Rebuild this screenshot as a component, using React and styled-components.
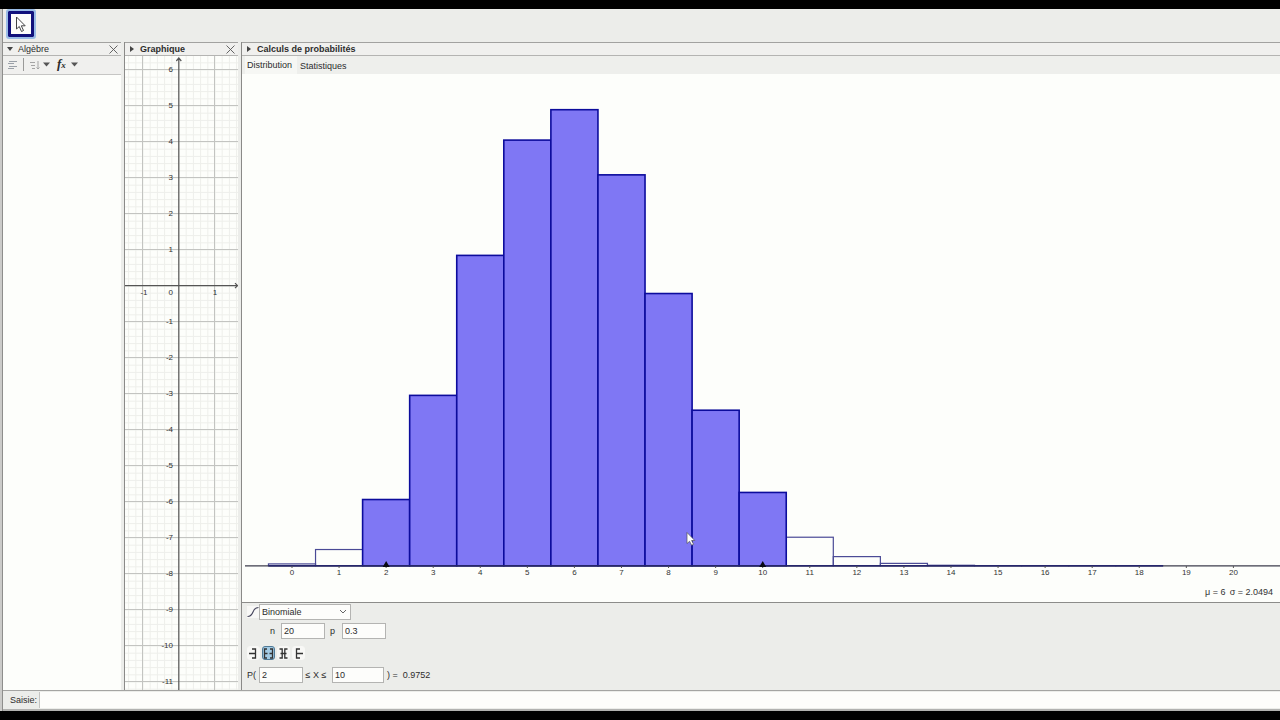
import { useState } from 'react'
import styled, { createGlobalStyle } from 'styled-components'

const GlobalStyle = createGlobalStyle`
  * {
    box-sizing: border-box;
  }

  body {
    margin: 0;
    background: #000;
    color: #2c2c2c;
    font-family: "Liberation Sans", Arial, sans-serif;
    font-size: 9px;
  }

  button, input, select {
    font: inherit;
    color: inherit;
  }
`

const Screen = styled.div`
  display: flex;
  flex-direction: column;
  min-height: 100vh;
  padding: 9px 0;
  overflow: hidden;
`

const Window = styled.main`
  display: flex;
  flex: 1;
  flex-direction: column;
  margin-left: 2px;
  border-left: 1px solid #8e8e8c;
  box-shadow: -2px 0 #cbcbc9;
  background: #ecedea;
`

const Toolbar = styled.div`
  display: flex;
  height: 33px;
  padding: 2px 5px;
`

const ToolButton = styled.button`
  display: grid;
  place-items: center;
  width: 26px;
  height: 26px;
  padding: 0;
  border: 3px solid #11117c;
  border-radius: 1px;
  outline: 2px solid #9abce6;
  background: #fdfdfb;
`

const Panels = styled.div`
  display: grid;
  flex: 1;
  grid-template-columns: 118px 114px 1fr;
  column-gap: 3px;
  border-bottom: 1px solid #a4a4a2;
`

const Panel = styled.section`
  display: flex;
  flex-direction: column;
  min-width: 0;
  border-left: ${props => props.$edge ? "1px solid #8a8a88" : "none"};
`

const PanelHeader = styled.header`
  display: flex;
  align-items: center;
  gap: 5px;
  height: 14px;
  padding: 0 3px 0 4px;
  border-top: 1px solid #a2a2a0;
  border-bottom: 1px solid #b4b4b2;
  background: #f0f0ee;
`

const PanelTitle = styled.h2`
  flex: 1;
  margin: 0;
  font-size: 9px;
  font-weight: ${props => props.$light ? "normal" : "bold"};
  line-height: 12px;
  white-space: nowrap;
`

const PlainButton = styled.button`
  display: flex;
  align-items: center;
  gap: 3px;
  padding: 0;
  border: none;
  background: none;
`

const StyleBar = styled.div`
  display: flex;
  align-items: center;
  gap: 6px;
  height: 19px;
  padding: 0 5px 1px;
  border-bottom: 1px solid #c6c6c4;
  background: #f0f0ee;
`

const Separator = styled.span`
  width: 1px;
  height: 13px;
  background: #9a9a98;
`

const FunctionIcon = styled.span`
  width: 12px;
  padding-left: 1px;
  font-family: "Liberation Serif", serif;
  font-size: 13px;
  font-style: italic;
  font-weight: bold;
  line-height: 14px;
  text-align: left;
  white-space: nowrap;

  small {
    font-size: 9px;
  }
`

const AlgebraList = styled.div`
  flex: 1;
  background: #fdfefb;
`

const PlaneSvg = styled.svg`
  display: block;
  flex: 1;
  width: 100%;
  height: 0;
  min-height: 0;
  background: #fdfefb;
`

const Tabs = styled.div`
  display: flex;
  height: 18px;
  padding-left: 3px;
  background: #eeefec;
`

const Tab = styled.button`
  height: 18px;
  padding: ${props => props.$active ? "0 5px 0 2px" : "2px 3px 0"};
  border: none;
  background: ${props => props.$active ? "#f6f7f4" : "none"};
  line-height: 16px;
`

const Plot = styled.div`
  flex: 1;
  padding-left: 3px;
  border-bottom: 1px solid #8c8c8a;
  background: #fdfefb;
`

const PlotSvg = styled.svg`
  display: block;
  width: 100%;
  height: auto;
`

const Controls = styled.div`
  display: flex;
  flex-direction: column;
  height: 87px;
  padding: 1px 5px;
`

const Row = styled.div`
  display: flex;
  align-items: center;
  gap: ${props => props.$gap || 0}px;
  height: 16px;
  margin-bottom: ${props => props.$below || 0}px;
  padding-left: ${props => props.$indent || 0}px;
`

const SelectBox = styled.div`
  display: grid;
  grid-template-columns: 1fr 14px;
  align-items: center;
  width: 92px;
  height: 16px;
  border: 1px solid #b4b4b2;
  background: #fdfdfb;
`

const Select = styled.select`
  grid-area: 1 / 1 / 2 / 3;
  height: 14px;
  padding: 0 2px;
  border: none;
  appearance: none;
  background: none;
`

const SelectArrow = styled.svg`
  grid-area: 1 / 2;
  justify-self: center;
  pointer-events: none;
`

const Field = styled.input`
  width: ${props => props.$wide ? 52 : 44}px;
  height: 16px;
  padding: 0 2px;
  border: 1px solid #b4b4b2;
  background: #fdfdfb;
`

const Label = styled.label`
  width: ${props => props.$width}px;
  white-space: nowrap;
`

const Result = styled.output`
  padding-left: 3px;
`

const CurveButton = styled(PlainButton)`
  background: #f8f8f6;
`

const IntervalButton = styled.button`
  display: grid;
  place-items: center;
  width: 13px;
  height: 14px;
  padding: 0;
  border: 1px solid ${props => props.$active ? "#4f7a97" : "#f8f8f6"};
  border-radius: 3px;
  background: ${props => props.$active ? "#a3cbe4" : "#f8f8f6"};
`

const InputBar = styled.div`
  display: flex;
  align-items: center;
  height: 20px;
  padding: 1px 0 1px 7px;
  border-bottom: 2px solid #b2b2b0;
`

const CommandInput = styled.input`
  flex: 1;
  height: 16px;
  border: none;
  border-left: 1px solid #c4c4c2;
  outline: none;
  background: #fdfdfb;
`

const TRIALS = 20
const SUCCESS = 0.3

// binomial probabilities P(X = k)
const probabilities = [Math.pow(1 - SUCCESS, TRIALS)]
for (let k = 1; k <= TRIALS; k++) {
  probabilities.push(probabilities[k - 1] * (TRIALS - k + 1) / k * SUCCESS / (1 - SUCCESS))
}

const range = (from, to) => Array.from({ length: to - from + 1 }, (_, i) => from + i)

const Arrow = ({ open }) => (
  <svg width="6" height="6" viewBox="0 0 6 6" fill="#444">
    {open ? <path d="M0 1h6L3 5z" /> : <path d="M1 0v6l4-3z" />}
  </svg>
)

const Close = () => (
  <PlainButton aria-label="Fermer">
    <svg width="9" height="9" viewBox="0 0 9 9" stroke="#555" strokeWidth="0.9">
      <path d="M0.5 0.5l8 8M8.5 0.5l-8 8" />
    </svg>
  </PlainButton>
)

const Caret = () => (
  <svg width="7" height="5" viewBox="0 0 7 5" fill="#555"><path d="M0 0.5h7L3.5 4.5z" /></svg>
)

const Plane = () => {
  const unit = 36
  const x0 = 54
  const y0 = 230
  return (
    <PlaneSvg viewBox="0 0 113 634" preserveAspectRatio="xMinYMin slice">
      <g stroke="#eeefeb" strokeWidth="1">
        {range(-7, 8).map(i => <path key={i} d={`M${x0 + i * unit / 5} 0V634`} />)}
        {range(-31, 56).map(i => <path key={i} d={`M0 ${y0 + i * unit / 5}H113`} />)}
      </g>
      <g stroke="#c3c4c1" strokeWidth="1">
        {[-1, 1].map(i => <path key={i} d={`M${x0 + i * unit - 0.5} 0V634`} />)}
        {range(-6, 11).map(i => <path key={i} d={`M0 ${y0 + i * unit - 0.5}H113`} />)}
      </g>
      <g stroke="#555" strokeWidth="1.2" fill="none">
        <path d="M53.8 2V634M51.3 5l2.5-3 2.5 3" />
        <path d="M0 229.7H112M110 227.2l2.5 2.5-2.5 2.5" />
      </g>
      <g fontSize="8" fill="#333">
        {range(-11, 6).filter(v => v !== 0).map(v => (
          <text key={v} x="48" y={y0 - v * unit + 2} textAnchor="end">{v}</text>
        ))}
        <text x="48" y="239" textAnchor="end">0</text>
        <text x="19" y="239" textAnchor="middle">-1</text>
        <text x="90" y="239" textAnchor="middle">1</text>
      </g>
    </PlaneSvg>
  )
}

const Histogram = ({ low, high }) => {
  const step = 47.07
  const x0 = 47
  const base = 491.8
  const scale = 2380
  const inside = k => k >= low && k <= high
  const bar = k => {
    const h = probabilities[k] * scale
    return (
      <rect
        key={k}
        x={x0 + (k - 0.5) * step}
        y={base - h}
        width={step}
        height={h}
        fill={inside(k) ? "#7f77f4" : "none"}
        stroke={inside(k) ? "#0c0c9c" : "#4a4a96"}
        strokeWidth={inside(k) ? 1.6 : 1.2}
      />
    )
  }
  return (
    <PlotSvg viewBox="0 0 1035 528">
      {range(0, 18).filter(k => !inside(k)).map(bar)}
      {range(0, 18).filter(inside).map(bar)}
      <path d={`M0 ${base}H1035`} stroke="#3c3c4c" strokeWidth="1.2" />
      <path d={`M${x0 - step / 2} ${base}H918`} stroke="#26266c" strokeWidth="1.4" />
      <g fontSize="8" fill="#333" textAnchor="middle">
        {range(0, 20).map(k => (
          <g key={k}>
            <path d={`M${x0 + k * step} 492v2`} stroke="#555" />
            <text x={x0 + k * step} y="501">{k}</text>
          </g>
        ))}
      </g>
      {[low, high].map(k => (
        <path key={k} d={`M${x0 + k * step - 3.5} 493l3.500-6 3.500 6z`} fill="#0a0a14" />
      ))}
      <text x="960" y="521" fontSize="9" fill="#333">μ = 6</text>
      <text x="1028" y="521" fontSize="9" fill="#333" textAnchor="end">σ = 2.0494</text>
      <path
        d="M442 458.500v11l2.600-2.200 2 4 2-1-2-3.800h3.200z"
        fill="#fff" stroke="#555" strokeWidth="0.7"
      />
    </PlotSvg>
  )
}

const intervals = [
  { id: "left", label: "À gauche", path: "M1 5.500H7M4 1H7.500V10H4" },
  { id: "between", label: "Intervalle", path: "M4 1H1.500V10H4M7 1H9.500V10H7M2 5.500H4.500M6.500 5.500H9" },
  { id: "tails", label: "Deux côtés", path: "M1.500 1H4.200V10H1.500M9.500 1H6.800V10H9.500M2.500 5.500H8.500" },
  { id: "right", label: "À droite", path: "M10 5.500H4M7 1H3.500V10H7" },
]

const ProbabilityControls = ({ low, high, setLow, setHigh }) => {
  const [interval, setInterval] = useState("between")
  const total = probabilities.reduce((sum, p, k) => k >= low && k <= high ? sum + p : sum, 0)
  return (
    <Controls>
      <Row $below={3}>
        <CurveButton aria-label="Fonction de répartition">
          <svg width="12" height="12" viewBox="0 0 12 12" fill="none" stroke="#44445c" strokeWidth="1.1">
            <path d="M0.500 10.500C8 10.500 4 1.500 11.500 1.500" />
          </svg>
        </CurveButton>
        <SelectBox>
          <Select aria-label="Loi" defaultValue="Binomiale">
            <option>Binomiale</option>
            <option>Normale</option>
            <option>Poisson</option>
          </Select>
          <SelectArrow width="8" height="6" viewBox="0 0 8 6" fill="none" stroke="#666">
            <path d="M1 1l3 3 3-3" />
          </SelectArrow>
        </SelectBox>
      </Row>
      <Row $below={6} $indent={23}>
        <Label $width={11} htmlFor="n">n</Label>
        <Field id="n" defaultValue="20" />
        <Label $width={17} htmlFor="p">&nbsp; p</Label>
        <Field id="p" defaultValue="0.3" />
      </Row>
      <Row $below={6} $gap={2}>
        {intervals.map(({ id, label, path }) => (
          <IntervalButton key={id} aria-label={label} $active={interval === id} onClick={() => setInterval(id)}>
            <svg width="11" height="11" viewBox="0 0 11 11" fill="none" stroke="#333" strokeWidth="1.3">
              <path d={path} />
            </svg>
          </IntervalButton>
        ))}
      </Row>
      <Row>
        <Label $width={12} htmlFor="low">P(</Label>
        <Field id="low" value={low} onChange={e => setLow(Number(e.target.value))} />
        <Label $width={29} htmlFor="high">&nbsp;≤ X ≤</Label>
        <Field $wide id="high" value={high} onChange={e => setHigh(Number(e.target.value))} />
        <Result>) =&nbsp; {total.toFixed(4)}</Result>
      </Row>
    </Controls>
  )
}

function App() {
  const [low, setLow] = useState(2)
  const [high, setHigh] = useState(10)

  return (
    <Screen>
      <GlobalStyle />
      <Window>
        <Toolbar>
          <ToolButton aria-label="Déplacer">
            <svg width="12" height="17" viewBox="0 0 12 17" fill="#fff" stroke="#444" strokeWidth="1">
              <path d="M1.500 1v12l2.800-2.500 2.200 5 2-1-2.200-4.700h3.900z" />
            </svg>
          </ToolButton>
        </Toolbar>

        <Panels>
          <Panel>
            <PanelHeader>
              <Arrow open />
              <PanelTitle $light>Algèbre</PanelTitle>
              <Close />
            </PanelHeader>
            <StyleBar>
              <PlainButton aria-label="Objets auxiliaires">
                <svg width="9" height="10" viewBox="0 0 9 10" stroke="#9aa0a8">
                  <path d="M1 1.500h8M0 3.500h6M1 6.500h8M0 8.500h6" />
                </svg>
              </PlainButton>
              <Separator />
              <PlainButton aria-label="Trier par">
                <svg width="10" height="10" viewBox="0 0 10 10" fill="none" stroke="#a4a4a4">
                  <path d="M0 2.500h5M1 5.500h4M2 8.500h3M8 1v8M6.500 7.500L8 9l1.500-1.500" />
                </svg>
                <Caret />
              </PlainButton>
              <PlainButton aria-label="Fonctions">
                <FunctionIcon>f<small>x</small></FunctionIcon>
                <Caret />
              </PlainButton>
            </StyleBar>
            <AlgebraList />
          </Panel>

          <Panel $edge>
            <PanelHeader>
              <Arrow />
              <PanelTitle>Graphique</PanelTitle>
              <Close />
            </PanelHeader>
            <Plane />
          </Panel>

          <Panel $edge>
            <PanelHeader>
              <Arrow />
              <PanelTitle>Calculs de probabilités</PanelTitle>
            </PanelHeader>
            <Tabs>
              <Tab $active>Distribution</Tab>
              <Tab>Statistiques</Tab>
            </Tabs>
            <Plot>
              <Histogram low={low} high={high} />
            </Plot>
            <ProbabilityControls low={low} high={high} setLow={setLow} setHigh={setHigh} />
          </Panel>
        </Panels>

        <InputBar>
          <Label $width={29} htmlFor="command">Saisie:</Label>
          <CommandInput id="command" />
        </InputBar>
      </Window>
    </Screen>
  )
}

export default App
